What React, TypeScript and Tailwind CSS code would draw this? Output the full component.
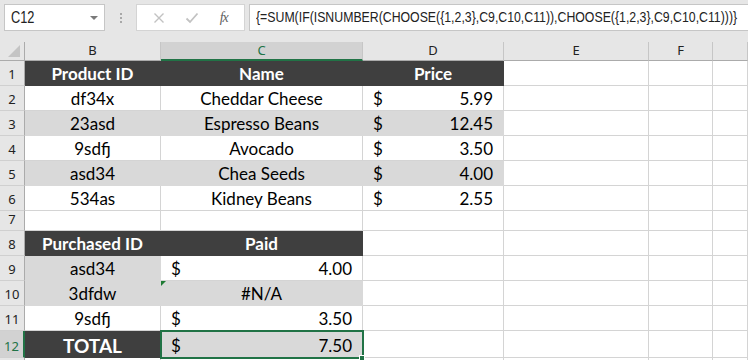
import React from "react";

const CELL_FONT = "font-['Lato',sans-serif] text-[17px] text-black";

type Fill = "none" | "dark" | "gray";

const fillClass: Record<Fill, string> = {
  none: "bg-white border-[#d4d4d4]",
  dark: "bg-[#3f3f3f] border-[#3f3f3f] text-white font-bold",
  gray: "bg-[#d9d9d9] border-[#d9d9d9]",
};

function Cell({
  fill = "none",
  children,
  className = "",
}: {
  fill?: Fill;
  children?: React.ReactNode;
  className?: string;
}) {
  return (
    <div
      className={`relative flex items-end justify-center pb-[1px] border-r border-b leading-[20px] ${fillClass[fill]} ${className}`}
    >
      {children}
    </div>
  );
}

// accounting format: $ on the left, amount on the right
function Money({ fill = "none", value, className = "" }: { fill?: Fill; value: string; className?: string }) {
  return (
    <Cell fill={fill} className={`!justify-between px-[10px] ${className}`}>
      <span>$</span>
      <span>{value}</span>
    </Cell>
  );
}

function Empty() {
  return <div className="border-r border-b border-[#d4d4d4] bg-white" />;
}

function RowHead({ n, active = false }: { n?: number; active?: boolean }) {
  return (
    <div
      className={`flex items-end justify-center pb-[2px] font-['Noto_Sans',sans-serif] text-[13px] leading-[18px] border-b border-[#d0d0d0] ${
        active ? "bg-[#d2d2d2] text-[#217346] border-r-2 border-r-[#217346]" : "bg-[#e6e6e6] text-[#222] border-r border-r-[#ababab]"
      }`}
    >
      {n}
    </div>
  );
}

function ColHead({ label, active = false }: { label?: string; active?: boolean }) {
  return (
    <div
      className={`flex items-center justify-center font-['Noto_Sans',sans-serif] text-[13px] border-r border-r-[#c6c6c6] ${
        active ? "bg-[#d2d2d2] text-[#217346] border-b-2 border-b-[#217346]" : "bg-[#e6e6e6] text-[#222] border-b border-b-[#ababab]"
      }`}
    >
      {label}
    </div>
  );
}

const PRODUCTS = [
  { id: "df34x", name: "Cheddar Cheese", price: "5.99" },
  { id: "23asd", name: "Espresso Beans", price: "12.45" },
  { id: "9sdfj", name: "Avocado", price: "3.50" },
  { id: "asd34", name: "Chea Seeds", price: "4.00" },
  { id: "534as", name: "Kidney Beans", price: "2.55" },
];

function FormulaBar() {
  return (
    <div className="h-[42px] bg-[#e6e6e6] flex items-start pt-[4px] pl-[4px] font-['Liberation_Sans',Arial,sans-serif]">
      {/* name box */}
      <div className="w-[101px] h-[27px] bg-white border border-[#c6c6c6] flex items-center justify-between pl-[6px] pr-[6px]">
        <span className="text-[16px] text-[#222] scale-x-[0.8] origin-left inline-block">C12</span>
        <span className="w-0 h-0 border-l-[4px] border-r-[4px] border-t-[4px] border-l-transparent border-r-transparent border-t-[#7a7a7a]" />
      </div>
      {/* grip dots */}
      <div className="w-[31px] h-[27px] flex flex-col items-center justify-center gap-[2px]">
        <span className="w-[2px] h-[2px] bg-[#a8a8a8]" />
        <span className="w-[2px] h-[2px] bg-[#a8a8a8]" />
        <span className="w-[2px] h-[2px] bg-[#a8a8a8]" />
      </div>
      {/* cancel / enter / fx */}
      <div className="w-[109px] h-[27px] bg-white border border-[#d4d4d4] flex items-center justify-around px-[6px]">
        <svg width="12" height="12" viewBox="0 0 12 12">
          <path d="M1.5 1.5 L10.5 10.5 M10.5 1.5 L1.5 10.5" stroke="#c2c2c2" strokeWidth="1.4" />
        </svg>
        <svg width="14" height="12" viewBox="0 0 14 12">
          <path d="M1.5 6.5 L5 10 L12.5 1.5" stroke="#c2c2c2" strokeWidth="1.8" fill="none" />
        </svg>
        <span className="font-['Liberation_Serif',serif] italic text-[14px] text-[#5f5f5f] tracking-[-1px]">fx</span>
      </div>
      {/* formula input */}
      <div className="ml-[4px] flex-1 h-[27px] bg-white border border-r-0 border-[#c6c6c6] flex items-center pl-[6px] overflow-hidden whitespace-nowrap">
        <span className="text-[15px] text-[#222] scale-x-[0.82] origin-left inline-block">
          {"{=SUM(IF(ISNUMBER(CHOOSE({1,2,3},C9,C10,C11)),CHOOSE({1,2,3},C9,C10,C11)))}"}
        </span>
      </div>
    </div>
  );
}

export default function App() {
  return (
    <div className="w-[748px] h-[360px] overflow-hidden bg-white">
      <FormulaBar />

      <div
        className={`grid grid-cols-[25px_136px_202px_141px_145px_64px_1fr] grid-rows-[19px_25px_25px_25px_25px_25px_25px_20px_25px_25px_25px_25px_27px_25px] ${CELL_FONT}`}
      >
        {/* column headers; select-all corner */}
        <div className="relative bg-[#e6e6e6] border-r border-b border-[#ababab]">
          <svg className="absolute right-[4px] bottom-[3px]" width="12" height="12" viewBox="0 0 12 12">
            <path d="M12 0 V12 H0 Z" fill="#c4c4c4" />
          </svg>
        </div>
        <ColHead label="B" />
        <ColHead label="C" active />
        <ColHead label="D" />
        <ColHead label="E" />
        <ColHead label="F" />
        <ColHead />

        {/* row 1 */}
        <RowHead n={1} />
        <Cell fill="dark">Product ID</Cell>
        <Cell fill="dark">Name</Cell>
        <Cell fill="dark">Price</Cell>
        <Empty />
        <Empty />
        <Empty />

        {PRODUCTS.map((p, i) => {
          const fill: Fill = i % 2 === 1 ? "gray" : "none";
          return (
            <React.Fragment key={p.id}>
              <RowHead n={i + 2} />
              <Cell fill={fill}>{p.id}</Cell>
              <Cell fill={fill}>{p.name}</Cell>
              <Money fill={fill} value={p.price} />
              <Empty />
              <Empty />
              <Empty />
            </React.Fragment>
          );
        })}

        {/* row 7 */}
        <RowHead n={7} />
        <Empty />
        <Empty />
        <Empty />
        <Empty />
        <Empty />
        <Empty />

        {/* row 8 */}
        <RowHead n={8} />
        <Cell fill="dark">Purchased ID</Cell>
        <Cell fill="dark">Paid</Cell>
        <Empty />
        <Empty />
        <Empty />
        <Empty />

        {/* row 9 */}
        <RowHead n={9} />
        <Cell fill="gray">asd34</Cell>
        <Money value="4.00" />
        <Empty />
        <Empty />
        <Empty />
        <Empty />

        {/* row 10 */}
        <RowHead n={10} />
        <Cell fill="gray">3dfdw</Cell>
        <Cell fill="gray">
          <svg className="absolute left-0 top-0" width="5" height="5" viewBox="0 0 5 5">
            <path d="M0 0 H5 L0 5 Z" fill="#1e7b34" />
          </svg>
          #N/A
        </Cell>
        <Empty />
        <Empty />
        <Empty />
        <Empty />

        {/* row 11 */}
        <RowHead n={11} />
        <Cell>9sdfj</Cell>
        <Money value="3.50" />
        <Empty />
        <Empty />
        <Empty />
        <Empty />

        {/* row 12 */}
        <RowHead n={12} active />
        <Cell fill="dark" className="text-[19px]">TOTAL</Cell>
        <Money fill="gray" value="7.50" className="outline-2 outline-[#217346] -outline-offset-1 z-10" />
        <Empty />
        <Empty />
        <Empty />
        <Empty />

        {/* row 13, mostly off-screen */}
        <RowHead />
        <Empty />
        <div className="relative border-r border-b border-[#d4d4d4] bg-white">
          <span className="absolute -right-[3px] -top-[3px] w-[6px] h-[6px] bg-[#217346] border border-white z-20" />
        </div>
        <Empty />
        <Empty />
        <Empty />
        <Empty />
      </div>
    </div>
  );
}
